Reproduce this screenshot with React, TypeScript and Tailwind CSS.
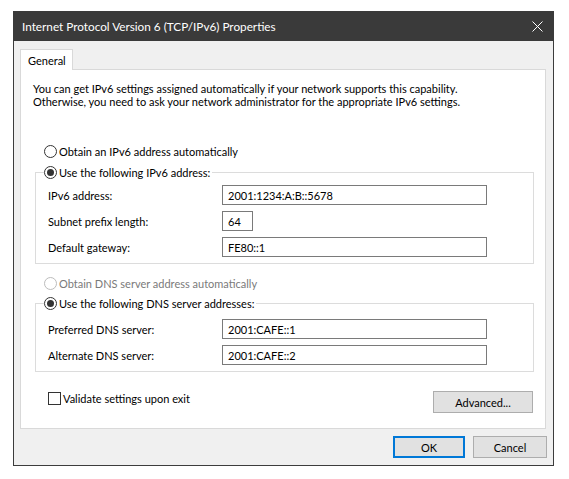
import React from "react";

const font = { fontFamily: 'Lato, "Liberation Sans", Arial, sans-serif' };

function Radio({ checked, disabled }: { checked?: boolean; disabled?: boolean }) {
  return (
    <span
      className={`flex h-[13px] w-[13px] shrink-0 items-center justify-center rounded-full border bg-white ${
        disabled ? "border-[#bcbcbc]" : "border-[#333333]"
      }`}
    >
      {checked && <span className="h-[7px] w-[7px] rounded-full bg-[#333333]" />}
    </span>
  );
}

function RadioLabel({ label, checked, disabled }: { label: string; checked?: boolean; disabled?: boolean }) {
  return (
    <span className={`flex h-[16px] items-center gap-[2px] pr-[2px] ${disabled ? "text-[#7a7a7a]" : "text-black"}`}>
      <Radio checked={checked} disabled={disabled} />
      <span>{label}</span>
    </span>
  );
}

function Field({ label, value, narrow }: { label: string; value: string; narrow?: boolean }) {
  return (
    <div className="flex h-[20px] items-center">
      <div className="w-[174px] shrink-0">{label}</div>
      <div
        className={`flex h-[20px] items-center border border-[#7a7a7a] bg-white pl-[5px] ${
          narrow ? "w-[31px]" : "w-[265px]"
        }`}
      >
        {value}
      </div>
    </div>
  );
}

function WinButton({ children, primary, width }: { children: React.ReactNode; primary?: boolean; width: string }) {
  return (
    <button
      className={`flex h-[22px] items-center justify-center bg-[#e1e1e1] ${width} ${
        primary ? "border-2 border-[#0078d7]" : "border border-[#adadad]"
      }`}
    >
      {children}
    </button>
  );
}

export default function App() {
  return (
    <div className="h-[479px] w-[569px] bg-white pl-[13px] pt-[11px] text-[11px] leading-[13px] text-black" style={font}>
      <div className="flex h-[455px] w-[541px] flex-col border-x border-b border-[#3c3c3c] bg-[#f0f0f0]">
        {/* title bar */}
        <div className="-mx-px flex h-[30px] shrink-0 items-center justify-between bg-[#3a3a3a] pl-[9px] pr-[10px] text-[11.75px] text-white">
          <span>Internet Protocol Version 6 (TCP/IPv6) Properties</span>
          <svg width="11" height="11" viewBox="0 0 11 11" className="mr-[1px]">
            <path d="M0.5 0.5 L10.5 10.5 M10.5 0.5 L0.5 10.5" stroke="#ffffff" strokeWidth="1" />
          </svg>
        </div>

        <div className="flex flex-1 flex-col pl-[6px] pr-[6px] pt-[8px]">
          {/* tabs */}
          <div className="flex">
            <div className="relative z-10 -mb-px flex h-[21px] w-[53px] items-start border border-b-0 border-[#d9d9d9] bg-white pl-[7px] pt-[4px]">
              General
            </div>
          </div>

          {/* tab panel */}
          <div className="mr-px flex h-[360px] flex-col border border-[#d9d9d9] bg-white pl-[12px] pr-[11px] pt-[12px]">
            <p>
              You can get IPv6 settings assigned automatically if your network supports this capability.
              <br />
              Otherwise, you need to ask your network administrator for the appropriate IPv6 settings.
            </p>

            <div className="ml-[11px] mt-[35px] flex">
              <RadioLabel label="Obtain an IPv6 address automatically" />
            </div>

            <fieldset className="ml-[2px] mt-[5px] border border-[#dcdcdc] pb-[6px] pl-[12px]">
              <legend className="-ml-[4px]">
                <RadioLabel label="Use the following IPv6 address:" checked />
              </legend>
              <div className="mt-[5px] flex flex-col gap-[6px]">
                <Field label="IPv6 address:" value="2001:1234:A:B::5678" />
                <Field label="Subnet prefix length:" value="64" narrow />
                <Field label="Default gateway:" value="FE80::1" />
              </div>
            </fieldset>

            <div className="ml-[11px] mt-[11px] flex">
              <RadioLabel label="Obtain DNS server address automatically" disabled />
            </div>

            <fieldset className="ml-[2px] mt-[4px] border border-[#dcdcdc] pb-[6px] pl-[12px]">
              <legend className="-ml-[4px]">
                <RadioLabel label="Use the following DNS server addresses:" checked />
              </legend>
              <div className="mt-[8px] flex flex-col gap-[6px]">
                <Field label="Preferred DNS server:" value="2001:CAFE::1" />
                <Field label="Alternate DNS server:" value="2001:CAFE::2" />
              </div>
            </fieldset>

            <div className="ml-[15px] mr-[1px] mt-[18px] flex items-start justify-between">
              <label className="flex h-[16px] items-center gap-[2px]">
                <span className="h-[13px] w-[13px] border border-[#333333] bg-white" />
                <span>Validate settings upon exit</span>
              </label>
              <div className="mt-[1px]">
                <WinButton width="w-[100px]">Advanced...</WinButton>
              </div>
            </div>
          </div>

          {/* dialog buttons */}
          <div className="mt-[7px] flex justify-end gap-[8px]">
            <WinButton primary width="w-[72px]">OK</WinButton>
            <WinButton width="w-[74px]">Cancel</WinButton>
          </div>
        </div>
      </div>
    </div>
  );
}
